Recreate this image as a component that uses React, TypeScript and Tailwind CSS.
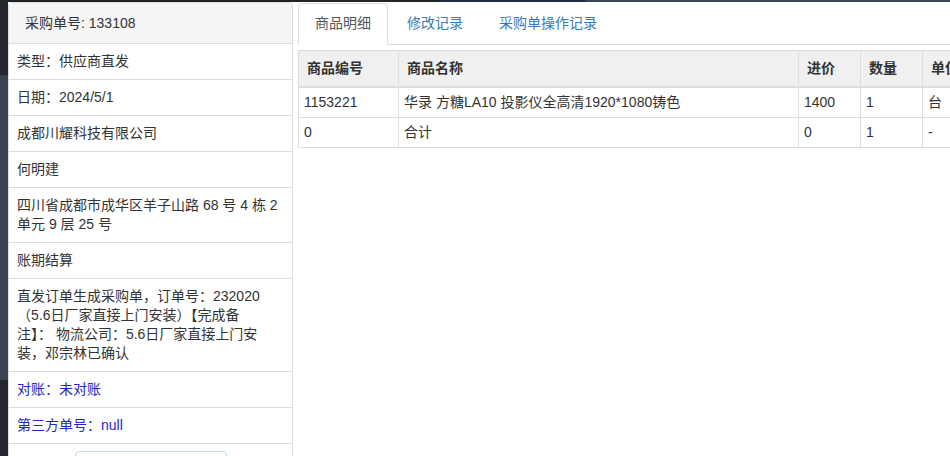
import React from 'react';

const infoRows: { lines: string[]; blue?: boolean }[] = [
  { lines: ['类型：供应商直发'] },
  { lines: ['日期：2024/5/1'] },
  { lines: ['成都川耀科技有限公司'] },
  { lines: ['何明建'] },
  { lines: ['四川省成都市成华区羊子山路 68 号 4 栋 2', '单元 9 层 25 号'] },
  { lines: ['账期结算'] },
  {
    lines: [
      '直发订单生成采购单，订单号：232020',
      '（5.6日厂家直接上门安装）【完成备',
      '注】： 物流公司：5.6日厂家直接上门安',
      '装，邓宗林已确认',
    ],
  },
  { lines: ['对账：未对账'], blue: true },
  { lines: ['第三方单号：null'], blue: true },
];

const items = [
  { code: '1153221', name: '华录 方糖LA10 投影仪全高清1920*1080铸色', price: '1400', qty: '1', unit: '台' },
  { code: '0', name: '合计', price: '0', qty: '1', unit: '-' },
];

export default function App() {
  return (
    <div
      className="w-[950px] h-[456px] overflow-hidden flex bg-white text-[#333] text-[14px]"
      style={{ fontFamily: '"Liberation Sans", "Noto Sans CJK SC", sans-serif' }}
    >
      {/* dark backdrop strip on the left */}
      <div className="w-[8px] shrink-0 flex flex-col">
        <div className="h-[75px] bg-[#23272b]" />
        <div className="h-[305px] bg-[#3a4450]" />
        <div className="flex-1 bg-[#24272c]" />
      </div>

      <div className="flex-1 flex flex-col min-w-0">
        {/* dark backdrop strip on top */}
        <div className="h-[2px] shrink-0 flex">
          <div className="w-[432px] bg-[#202226]" />
          <div className="w-[145px] bg-[#1c2b48]" />
          <div className="flex-1 bg-[#3b4350]" />
        </div>

        <div className="flex-1 flex min-h-0">
          {/* left info panel */}
          <div className="w-[285px] shrink-0 border border-b-0 border-[#ddd] rounded-t-[4px] flex flex-col">
            <div className="h-[41px] shrink-0 bg-[#f5f5f5] border-b border-[#ddd] px-4 flex items-center">
              采购单号: 133108
            </div>
            {infoRows.map((row, i) => (
              <div
                key={i}
                className={`px-2 py-2 leading-[19px] border-b border-[#ddd] whitespace-nowrap ${row.blue ? 'text-[#2626c8]' : ''}`}
              >
                {row.lines.map((l, k) => (
                  <div key={k}>{l}</div>
                ))}
              </div>
            ))}
            <div className="flex justify-center pt-[7px]">
              <button className="w-[152px] h-[30px] shrink-0 border border-[#b8dde6] rounded-[4px] bg-white" />
            </div>
          </div>

          {/* right panel */}
          <div className="flex-1 ml-[5px] pt-px flex flex-col min-w-0">
            <div className="flex border-b border-[#ddd]">
              <div className="-mb-px px-4 py-[10px] leading-[19px] border border-[#ddd] border-b-white rounded-t-[4px] bg-white text-[#555] mr-[2px]">
                商品明细
              </div>
              <div className="px-4 py-[10px] leading-[19px] border border-transparent text-[#3a7ab5] mr-[2px]">
                修改记录
              </div>
              <div className="px-4 py-[10px] leading-[19px] border border-transparent text-[#3a7ab5]">
                采购单操作记录
              </div>
            </div>

            <div className="mt-[5px]">
              <table className="table-fixed w-[720px] border-collapse border border-[#ddd]">
                <colgroup>
                  <col className="w-[100px]" />
                  <col className="w-[400px]" />
                  <col className="w-[62px]" />
                  <col className="w-[62px]" />
                  <col className="w-[96px]" />
                </colgroup>
                <thead>
                  <tr className="bg-[#f0f0f0]">
                    {['商品编号', '商品名称', '进价', '数量', '单位'].map((h) => (
                      <th
                        key={h}
                        className="text-left font-bold px-2 py-2 leading-[19px] border border-[#ddd] border-b-2 whitespace-nowrap"
                      >
                        {h}
                      </th>
                    ))}
                  </tr>
                </thead>
                <tbody>
                  {items.map((it, i) => (
                    <tr key={i}>
                      {[it.code, it.name, it.price, it.qty, it.unit].map((v, j) => (
                        <td key={j} className="px-[5px] py-[5px] leading-[19px] border border-[#ddd] whitespace-nowrap">
                          {v}
                        </td>
                      ))}
                    </tr>
                  ))}
                </tbody>
              </table>
            </div>
          </div>
        </div>
      </div>
    </div>
  );
}
